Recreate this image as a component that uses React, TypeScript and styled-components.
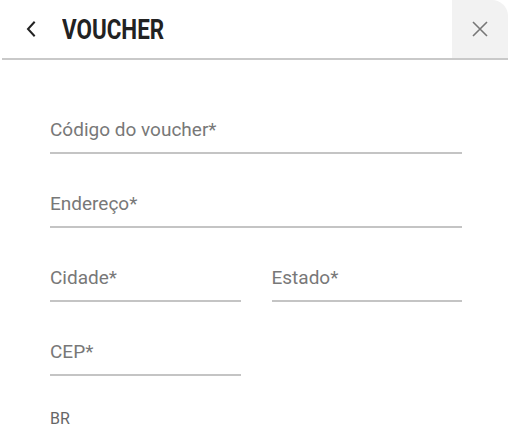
import React from "react";
import styled, { createGlobalStyle } from "styled-components";

const Global = createGlobalStyle`
  html, body { margin: 0; padding: 0; background: #ffffff; }
  body { font-family: Roboto, "Noto Sans", Arial, sans-serif; }
  * { box-sizing: border-box; }
`;

const Page = styled.div`
  width: 508px;
  height: 434px;
  background: #ffffff;
  overflow: hidden;
`;

const Header = styled.header`
  display: flex;
  align-items: stretch;
  height: 60px;
  border-bottom: 2px solid #c9c9c9;
  margin-left: 2px;
`;

const BackButton = styled.button`
  display: flex;
  align-items: center;
  justify-content: center;
  width: 60px;
  padding: 0 2px 0 0;
  border: none;
  background: transparent;
  color: #222222;
  cursor: pointer;
`;

const Title = styled.h1`
  flex: 1;
  margin: 0;
  display: flex;
  align-items: center;
  font-family: Roboto, Arial, sans-serif;
  font-weight: 700;
  font-size: 28px;
  letter-spacing: 0;
  color: #222222;
  span {
    display: inline-block;
    transform: scaleX(0.8);
    transform-origin: left center;
  }
`;

const CloseButton = styled.button`
  width: 56px;
  display: flex;
  align-items: center;
  justify-content: center;
  border: none;
  background: #f2f2f2;
  border-top-right-radius: 16px;
  color: #777777;
  cursor: pointer;
  padding: 0;
`;

const Form = styled.form`
  display: flex;
  flex-direction: column;
  gap: 38px;
  padding: 58px 46px 0 50px;
`;

const Row = styled.div<{ cols: number }>`
  display: grid;
  grid-template-columns: ${(p) => (p.cols === 2 ? "1fr 1fr" : "1fr")};
  column-gap: 31px;
`;

const Field = styled.label<{ half?: boolean }>`
  display: block;
  width: ${(p) => (p.half ? "191px" : "auto")};
  padding-bottom: 10px;
  border-bottom: 2px solid #c4c4c4;
  font-size: 19px;
  line-height: 24px;
  color: #787878;
`;

const Country = styled.div`
  font-size: 16px;
  line-height: 20px;
  color: #666666;
  margin-top: -5px;
`;

export default function App() {
  return (
    <Page>
      <Global />
      <Header>
        <BackButton type="button" aria-label="Voltar">
          <svg width="10" height="16" viewBox="0 0 10 16" fill="none">
            <path d="M8 1.5L2 8l6 6.5" stroke="currentColor" strokeWidth="2" strokeLinecap="square" />
          </svg>
        </BackButton>
        <Title>
          <span>VOUCHER</span>
        </Title>
        <CloseButton type="button" aria-label="Fechar">
          <svg width="18" height="18" viewBox="0 0 18 18" fill="none">
            <path d="M2 2l14 14M16 2L2 16" stroke="currentColor" strokeWidth="1.6" />
          </svg>
        </CloseButton>
      </Header>
      <Form>
        <Row cols={1}>
          <Field>Código do voucher*</Field>
        </Row>
        <Row cols={1}>
          <Field>Endereço*</Field>
        </Row>
        <Row cols={2}>
          <Field>Cidade*</Field>
          <Field>Estado*</Field>
        </Row>
        <Row cols={1}>
          <Field half>CEP*</Field>
        </Row>
        <Country>BR</Country>
      </Form>
    </Page>
  );
}
